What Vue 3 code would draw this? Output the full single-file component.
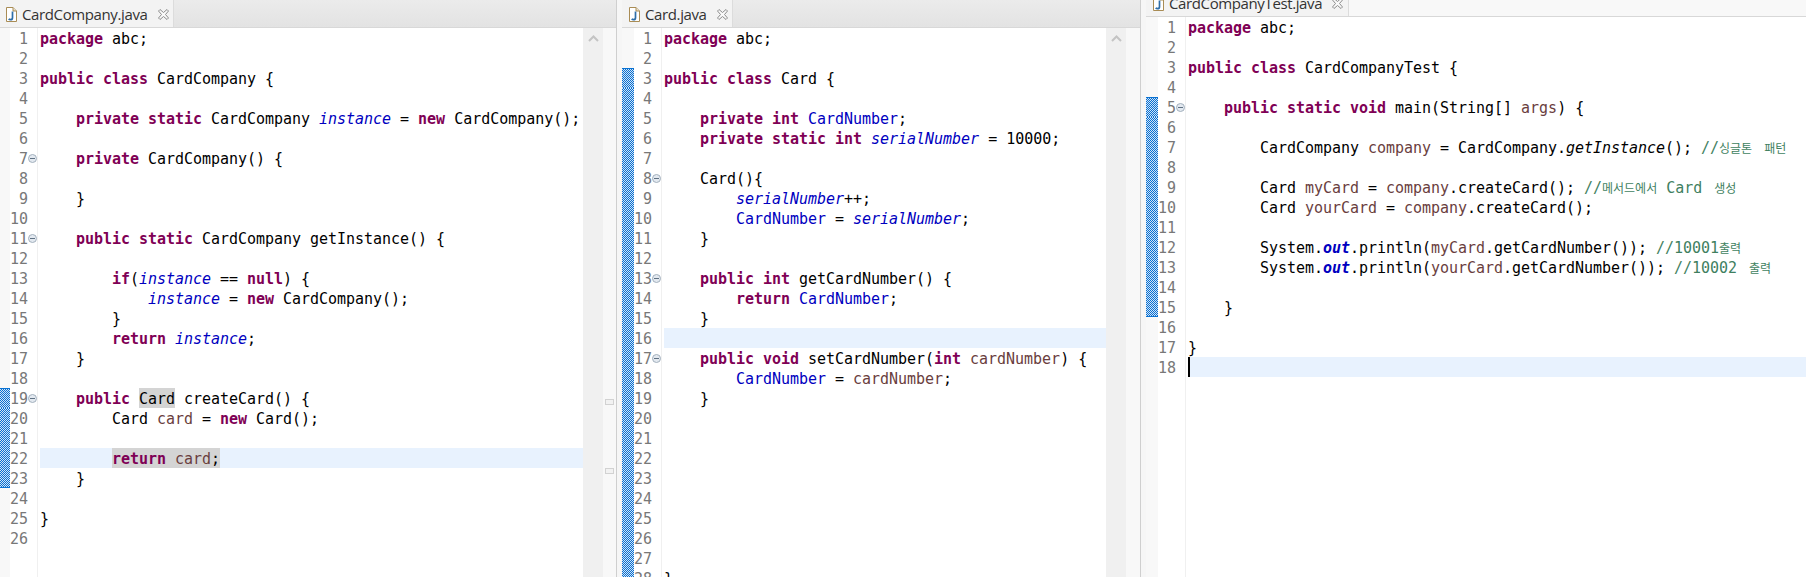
<script setup>
const panes = [
  {
    id: 'one', title: 'CardCompany.java', scroll: true, markers: [19, 22], current: 22, changed: [19, 23], folds: [7, 11, 19], count: 26,
    code: {
      1: '[k:package] abc;',
      3: '[k:public] [k:class] CardCompany {',
      5: '    [k:private] [k:static] CardCompany [sf:instance] = [k:new] CardCompany();',
      7: '    [k:private] CardCompany() {',
      9: '    }',
      11: '    [k:public] [k:static] CardCompany getInstance() {',
      13: '        [k:if]([sf:instance] == [k:null]) {',
      14: '            [sf:instance] = [k:new] CardCompany();',
      15: '        }',
      16: '        [k:return] [sf:instance];',
      17: '    }',
      19: '    [k:public] [s:Card] createCard() {',
      20: '        Card [l:card] = [k:new] Card();',
      22: '        [k s:return][l s: card][s:;]',
      23: '    }',
      25: '}'
    }
  },
  {
    id: 'two', title: 'Card.java', scroll: true, markers: [], current: 16, changed: [3, 28], folds: [8, 13, 17], count: 28,
    code: {
      1: '[k:package] abc;',
      3: '[k:public] [k:class] Card {',
      5: '    [k:private] [k:int] [f:CardNumber];',
      6: '    [k:private] [k:static] [k:int] [sf:serialNumber] = 10000;',
      8: '    Card(){',
      9: '        [sf:serialNumber]++;',
      10: '        [f:CardNumber] = [sf:serialNumber];',
      11: '    }',
      13: '    [k:public] [k:int] getCardNumber() {',
      14: '        [k:return] [f:CardNumber];',
      15: '    }',
      17: '    [k:public] [k:void] setCardNumber([k:int] [l:cardNumber]) {',
      18: '        [f:CardNumber] = [l:cardNumber];',
      19: '    }',
      28: '}'
    }
  },
  {
    id: 'three', title: 'CardCompanyTest.java', scroll: false, markers: [], current: 18, caret: true, changed: [5, 15], folds: [5], count: 18,
    code: {
      1: '[k:package] abc;',
      3: '[k:public] [k:class] CardCompanyTest {',
      5: '    [k:public] [k:static] [k:void] main(String[] [l:args]) {',
      7: '        CardCompany [l:company] = CardCompany.[m:getInstance](); [c://][c kr:싱글톤][c: ][c kr gap:패턴]',
      9: '        Card [l:myCard] = [l:company].createCard(); [c://][c kr:메서드에서][c: Card ][c kr gap:생성]',
      10: '        Card [l:yourCard] = [l:company].createCard();',
      12: '        System.[sfo:out].println([l:myCard].getCardNumber()); [c://10001][c kr:출력]',
      13: '        System.[sfo:out].println([l:yourCard].getCardNumber()); [c://10002 ][c kr gap:출력]',
      15: '    }',
      17: '}'
    }
  }
]

function tokens(src) {
  if (!src) return []
  const out = []
  const re = /\[([a-z ]+):([^\]]*)\]/g
  let last = 0
  let m
  while ((m = re.exec(src))) {
    if (m.index > last) out.push({ cls: '', text: src.slice(last, m.index) })
    out.push({ cls: m[1], text: m[2] })
    last = m.index + m[0].length
  }
  if (last < src.length) out.push({ cls: '', text: src.slice(last) })
  return out
}

function range(n) {
  return Array.from({ length: n }, (_, i) => i + 1)
}
</script>

<template>
  <div class="ide">
    <section v-for="pane in panes" :key="pane.id" class="pane" :class="pane.id">
      <div class="body">
        <header class="tabbar">
          <div class="tab">
            <svg class="file-icon" width="11" height="15" viewBox="0 0 11 15">
              <path d="M.5.5h6.5l3.5 3.5v10.5h-10z" fill="#fff" stroke="#a98c55" />
              <path d="M7 .5v3.5h3.5" fill="#e8e0cc" stroke="#a98c55" />
              <path d="M6.5 4.500v6.200c0 1.400-1 2-2 2-.8 0-1.400-.3-1.800-.8" fill="none" stroke="#2f6ea8" stroke-width="1.700" />
            </svg>
            <span class="tab-title">{{ pane.title }}</span>
            <svg class="close-icon" width="11" height="11" viewBox="0 0 11 11">
              <path d="M.5 2 2 .5l3.500 3L9 .5 10.500 2l-3 3.500 3 3.500L9 10.500l-3.500-3-3.500 3L.5 9l3-3.500z" fill="#fafafa" stroke="#8c8c8c" />
            </svg>
          </div>
        </header>
        <div class="editor">
          <div class="strip">
            <div
              v-for="n in range(pane.count)"
              :key="n"
              class="strip-cell"
              :class="{
                changed: n >= pane.changed[0] && n <= pane.changed[1],
                first: n === pane.changed[0],
                last: n === pane.changed[1]
              }"
            ></div>
          </div>
          <div class="gutter">
            <div v-for="n in range(pane.count)" :key="n" class="gutter-row">
              <span class="num">{{ n }}</span>
              <span class="fold">
                <svg v-if="pane.folds.includes(n)" width="9" height="9" viewBox="0 0 9 9">
                  <circle cx="4.500" cy="4.500" r="4" fill="#e3e9f0" stroke="#a3b0bd" />
                  <path d="M2 4.500h5" stroke="#5f7183" />
                </svg>
              </span>
            </div>
          </div>
          <div class="code">
            <div
              v-for="n in range(pane.count)"
              :key="n"
              class="line"
              :class="{ current: n === pane.current, caret: pane.caret && n === pane.current }"
            ><span v-for="(t, i) in tokens(pane.code[n])" :key="i" :class="t.cls">{{ t.text }}</span></div>
          </div>
          <div v-if="pane.scroll" class="scrollbar">
            <svg class="chevron" width="11" height="7" viewBox="0 0 11 7">
              <path d="M1 6l4.500-4.500L10 6" fill="none" stroke="#c4c4c4" stroke-width="2" />
            </svg>
          </div>
          <div v-if="pane.scroll" class="overview">
            <span v-for="m in pane.markers" :key="m" class="marker" :class="'m' + m"></span>
          </div>
        </div>
      </div>
      <div v-if="pane.scroll" class="sash"></div>
    </section>
  </div>
</template>

<style>
html, body {
  margin: 0;
  background: #fff;
  overflow: hidden;
}
</style>

<style scoped>
.ide {
  display: flex;
  width: 1806px;
  height: 577px;
  overflow: hidden;
  background: #fff;
}
.pane {
  display: flex;
  flex: none;
  height: 577px;
  overflow: hidden;
}
.pane.one { width: 622px; }
.pane.two { width: 524px; }
.pane.three { width: 660px; }

.body {
  display: flex;
  flex-direction: column;
  flex: 1;
  min-width: 0;
}
.sash {
  flex: none;
  width: 5px;
  background: #f6f6f6;
  border-left: 1px solid #cfcfcf;
}

.tabbar {
  flex: none;
  box-sizing: border-box;
  height: 28px;
  display: flex;
  background: linear-gradient(#ebebeb, #e3e3e3);
  border-bottom: 1px solid #d8d8d8;
  overflow: hidden;
}
.three .tabbar {
  height: 17px;
  background: #f8f8f8;
}
.tab {
  flex: none;
  box-sizing: border-box;
  height: 28px;
  display: flex;
  align-items: center;
  background: #f3f3f3;
  border-right: 1px solid #dcdcdc;
  padding-left: 6px;
  font-family: "Open Sans", "Noto Sans", sans-serif;
  font-size: 15px;
  color: #333;
}
.one .tab { width: 174px; }
.two .tab { width: 111px; padding-left: 7px; }
.three .tab { width: 203px; margin-top: -11px; padding-left: 7px; }
.file-icon { flex: none; margin-right: 5px; }
.tab-title { flex: none; letter-spacing: -0.38px; }
.close-icon { flex: none; margin-left: 10px; }

.editor {
  flex: 1;
  min-height: 0;
  display: flex;
  font-family: "DejaVu Sans Mono", monospace;
  font-size: 15px;
  line-height: 22px;
  letter-spacing: -0.03px;
  color: #000;
}
.strip {
  flex: none;
  width: 12px;
  background: #f8f8f8;
}
.one .strip { width: 10px; }
.strip-cell { height: 20px; }
.strip-cell.changed {
  background: repeating-conic-gradient(#0a6fd0 0 25%, #cfe4f8 0 50%) 0 0 / 2px 2px;
}
.strip-cell.first { border-top: 1px solid #0a72d2; box-sizing: border-box; }
.strip-cell.last { border-bottom: 1px solid #0a72d2; box-sizing: border-box; }

.gutter {
  flex: none;
  width: 27px;
  border-right: 1px solid #f0f0f0;
  box-sizing: content-box;
}
.gutter-row {
  display: flex;
  height: 20px;
}
.num {
  width: 18px;
  text-align: right;
  color: #787878;
  white-space: nowrap;
}
.fold {
  width: 9px;
  display: flex;
  align-items: center;
}
.code {
  flex: 1;
  min-width: 0;
  margin-left: 2px;
  overflow: hidden;
}
.line {
  height: 20px;
  white-space: pre;
}
.line.current { background: #e8f2fe; }
.line.caret { box-shadow: inset 2px 0 0 #000; }

.scrollbar {
  flex: none;
  width: 20px;
  background: #f0f0f0;
  display: flex;
  justify-content: center;
  align-items: flex-start;
}
.chevron { margin-top: 7px; }
.overview {
  flex: none;
  width: 13px;
  background: #f8f8f8;
  position: relative;
}
.two .overview { width: 14px; }
.marker {
  position: absolute;
  left: 2px;
  width: 9px;
  height: 6px;
  box-sizing: border-box;
  border: 1px solid #d2d2d2;
  background: #f2f2f2;
}
.marker.m19 { top: 371px; }
.marker.m22 { top: 440px; }

.k { font-weight: 700; color: #7f0055; }
.f { color: #0000c0; }
.sf { color: #0000c0; font-style: italic; }
.l { color: #6a3e3e; }
.m { font-style: italic; }
.sfo { color: #0000c0; font-style: italic; font-weight: 700; }
.c { color: #3f7f5f; }
.kr {
  font-family: "Noto Sans CJK KR", sans-serif;
  font-size: 12px;
}
.gap { margin-left: 3px; }
.s {
  display: inline-block;
  height: 20px;
  vertical-align: top;
  background: #d4d4d4;
}
</style>
